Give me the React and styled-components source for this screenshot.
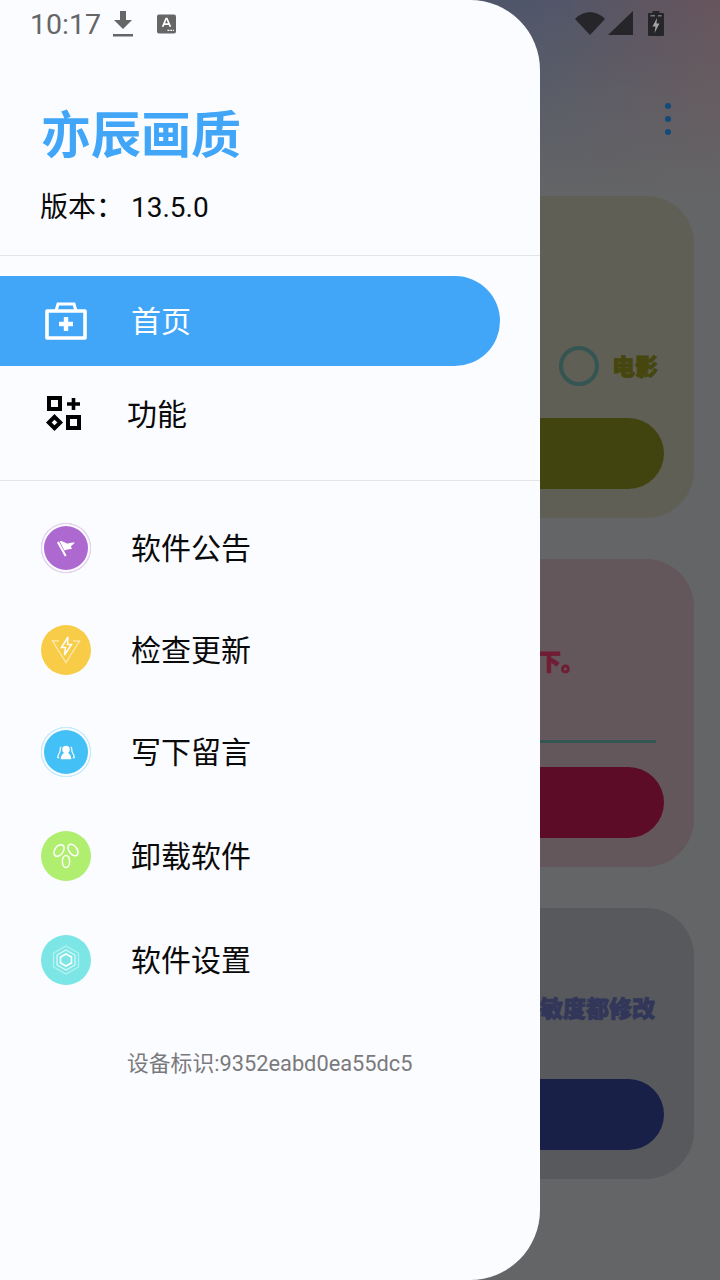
import React from 'react'
import styled, { createGlobalStyle } from 'styled-components'

const colors = {
    BLUE: '#42a6f8',
    DRAWER: '#fbfcff',
    DIVIDER: '#e4e5e9',
    RADIO: '#355552',
    LABEL: '#0a0a0a'
}

const GlobalStyle = createGlobalStyle`
    html, body {
        margin: 0;
        padding: 0;
        height: 100%;
        background: #656667;
    }
    * {
        box-sizing: border-box;
    }
    body {
        font-family: Roboto, "Noto Sans CJK SC", sans-serif;
    }
`

const Screen = styled.div`
    position: relative;
    width: 720px;
    height: 1280px;
    overflow: hidden;
    background: linear-gradient(to bottom, transparent 0, #646566 200px),
        linear-gradient(to right, #4b5665 0, #50566a 540px, #68555c 720px);
`

const Content = styled.main`
    display: flex;
    flex-direction: column;
    gap: 41px;
    padding: 196px 26px 0;
`

const Card = styled.section`
    display: flex;
    flex-direction: column;
    align-items: flex-end;
    height: ${p => p.$height}px;
    padding: 0 30px 29px;
    border-radius: 48px;
    background: ${p => p.$bg};
`

const CardRow = styled.div`
    display: flex;
    align-items: center;
    gap: 13px;
    margin-top: ${p => p.$top}px;
    margin-right: ${p => p.$right}px;
`

const Radio = styled.span`
    width: 40px;
    height: 40px;
    border: 4px solid ${colors.RADIO};
    border-radius: 50%;
`

const CardText = styled.span`
    padding-top: 3px;
    font-size: 23px;
    line-height: 34px;
    font-weight: 900;
    -webkit-text-stroke: 0.8px ${p => p.$color};
    color: ${p => p.$color};
`

const Progress = styled.div`
    width: 140px;
    height: 3px;
    margin-top: ${p => p.$top}px;
    margin-right: 8px;
    background: ${colors.RADIO};
`

const CardButton = styled.div`
    width: 300px;
    height: 71px;
    margin-top: auto;
    border-radius: 36px;
    background: ${p => p.$bg};
`

const MoreDots = styled.div`
    position: absolute;
    top: 103px;
    left: 665px;
    display: flex;
    flex-direction: column;
    gap: 7px;
`

const Dot = styled.span`
    width: 6px;
    height: 6px;
    border-radius: 50%;
    background: #124a78;
`

const Drawer = styled.aside`
    position: absolute;
    top: 0;
    left: 0;
    bottom: 0;
    display: flex;
    flex-direction: column;
    width: 540px;
    border-radius: 0 70px 70px 0;
    background: ${colors.DRAWER};
`

const DrawerHeader = styled.header`
    display: flex;
    flex-direction: column;
    height: 256px;
    padding: 99px 0 0 40px;
    border-bottom: 1px solid ${colors.DIVIDER};
`

const Title = styled.h1`
    margin: 0 0 0 1px;
    font-size: 50px;
    line-height: 74px;
    font-weight: 700;
    color: ${colors.BLUE};
`

const Version = styled.div`
    display: flex;
    margin-top: 15px;
    font-size: 28px;
    line-height: 40px;
    color: ${colors.LABEL};
`

const VersionLabel = styled.span`
    width: 91px;
`

const Nav = styled.nav`
    display: flex;
    flex-direction: column;
    height: 225px;
    padding-top: 20px;
    border-bottom: 1px solid ${colors.DIVIDER};
`

const NavItem = styled.div`
    display: flex;
    align-items: center;
    width: 500px;
    height: 90px;
    padding-left: ${p => p.$pad}px;
    gap: ${p => p.$gap}px;
    border-radius: 0 45px 45px 0;
    font-size: 30px;
    background: ${p => (p.$active ? colors.BLUE : 'transparent')};
    color: ${p => (p.$active ? '#fff' : colors.LABEL)};
    margin-top: ${p => p.$top || 0}px;
`

const ItemLabel = styled.span`
    margin-bottom: 5px;
`

const MenuList = styled.ul`
    display: flex;
    flex-direction: column;
    margin: 0;
    padding: 17px 0 0 41px;
    list-style: none;
`

const MenuItem = styled.li`
    display: flex;
    align-items: center;
    gap: 40px;
    height: 100px;
    margin-top: ${p => p.$top}px;
    font-size: 30px;
    color: ${colors.LABEL};
`

const Badge = styled.span`
    display: flex;
    align-items: center;
    justify-content: center;
    width: 50px;
    height: 50px;
    border-radius: 50%;
    background: ${p => p.$bg};
    box-shadow: ${p => (p.$ring ? `inset 0 0 0 1px ${p.$ring}, inset 0 0 0 3px #fbfcff` : 'none')};
`

const DeviceId = styled.div`
    margin: 38px 0 0 127px;
    font-size: 21.8px;
    line-height: 32px;
    color: #7a7a7c;
`

const StatusBar = styled.div`
    position: absolute;
    top: 0;
    left: 0;
    right: 0;
    display: flex;
    align-items: center;
    height: 48px;
    padding: 0 55px 0 30px;
`

const Time = styled.span`
    font-size: 28.5px;
    color: #666;
`

const StatusLeft = styled.div`
    display: flex;
    align-items: center;
    gap: 10px;
`

const StatusRight = styled.div`
    display: flex;
    align-items: center;
    gap: 13px;
    margin-left: auto;
`

const FlagIcon = () => (
    <svg width="22" height="22" viewBox="0 0 22 22" fill="#fff">
        <path d="M2 5.5 L3.8 4.5 L11.6 18.4 L9.8 19.4 Z" />
        <path d="M4.6 4.2 C8 2.8 10 6.6 13.2 6.4 C15.4 6.2 17.4 5.6 20 5.6 L15.8 9.4 L17 12 C14 11.6 11.6 13 9.4 13.4 Z" />
    </svg>
)

const BoltIcon = () => (
    <svg width="30" height="28" viewBox="0 0 30 28" fill="none" stroke="#fff">
        <path d="M8 5 H1.5 L15 26.5 L28.5 5 H22" strokeOpacity=".55" strokeWidth="1.4" />
        <path d="M17 1 L10.5 11.5 H14.5 L13.5 19 L20.5 8.5 H16.5 Z" strokeWidth="1.5" />
    </svg>
)

const PeopleIcon = () => (
    <svg width="18" height="15" viewBox="0 0 24 20" fill="#fff">
        <circle cx="12" cy="6" r="5" />
        <path d="M5 19 C5 13 8.5 10 12 10 C15.5 10 19 13 19 19 Z" />
        <path d="M5.5 2.5 C3 5 5 8 3.5 10 C2 12 1 14 1 17 H3" fill="none" stroke="#fff" strokeWidth="1.6" />
        <path d="M18.5 2.5 C21 5 19 8 20.5 10 C22 12 23 14 23 17 H21" fill="none" stroke="#fff" strokeWidth="1.6" />
    </svg>
)

const SeedIcon = () => (
    <svg width="28" height="26" viewBox="0 0 28 26" fill="none" stroke="#fff" strokeWidth="1.5">
        <ellipse cx="7" cy="7.5" rx="4.2" ry="6.5" transform="rotate(35 7 7.5)" />
        <ellipse cx="21" cy="7" rx="4" ry="6.5" transform="rotate(-35 21 7)" />
        <ellipse cx="14" cy="18.5" rx="3.6" ry="6" />
    </svg>
)

const HexIcon = () => (
    <svg width="28" height="30" viewBox="0 0 28 30" fill="none" stroke="#fff">
        <path d="M14 1 L26.5 8 V22 L14 29 L1.5 22 V8 Z" strokeOpacity=".45" strokeWidth="1.2" />
        <path d="M14 5 L23 10 V20 L14 25 L5 20 V10 Z" strokeOpacity=".75" strokeWidth="1.2" />
        <path d="M14 9 L19.5 12 V18 L14 21 L8.5 18 V12 Z" strokeWidth="1.6" />
    </svg>
)

const menu = [
    { label: '软件公告', bg: '#ad69cf', ring: '#e2cdee', top: 0, icon: <FlagIcon /> },
    { label: '检查更新', bg: '#f8cc46', top: 2, icon: <BoltIcon /> },
    { label: '写下留言', bg: '#43c0f5', ring: '#c3e9fb', top: 2, icon: <PeopleIcon /> },
    { label: '卸载软件', bg: '#b0ee70', top: 4, icon: <SeedIcon /> },
    { label: '软件设置', bg: '#7ce6e6', top: 4, icon: <HexIcon /> }
]

export default function App() {
    return (
        <Screen>
            <GlobalStyle />
            <Content>
                <Card $height={322} $bg="#5f5f55">
                    <CardRow $top={150} $right={6}>
                        <Radio />
                        <CardText $color="#46470f">电影</CardText>
                    </CardRow>
                    <CardButton $bg="#42440f" />
                </Card>
                <Card $height={308} $bg="#64575b">
                    <CardRow $top={84} $right={80}>
                        <CardText $color="#701c35">下。</CardText>
                    </CardRow>
                    <Progress $top={60} />
                    <CardButton $bg="#5c0c26" />
                </Card>
                <Card $height={271} $bg="#58595d">
                    <CardRow $top={82} $right={9}>
                        <CardText $color="#32375a">敏度都修改</CardText>
                    </CardRow>
                    <CardButton $bg="#182048" />
                </Card>
            </Content>

            <MoreDots>
                <Dot />
                <Dot />
                <Dot />
            </MoreDots>

            <Drawer>
                <DrawerHeader>
                    <Title>亦辰画质</Title>
                    <Version>
                        <VersionLabel>版本：</VersionLabel>
                        <span>13.5.0</span>
                    </Version>
                </DrawerHeader>
                <Nav>
                    <NavItem $active $pad={45} $gap={44}>
                        <svg width="42" height="38" viewBox="0 0 42 38" fill="none" stroke="#fff" strokeWidth="3.6">
                            <path d="M2 9 H40 V36 H2 Z" strokeLinejoin="round" />
                            <path d="M11 9 L13 2 H29 L31 9" strokeWidth="3" />
                            <path d="M21 15 V29 M14 22 H28" strokeWidth="4.4" />
                        </svg>
                        <ItemLabel>首页</ItemLabel>
                    </NavItem>
                    <NavItem $pad={46} $gap={45} $top={3}>
                        <svg width="36" height="36" viewBox="0 0 36 36" fill="none" stroke="#000" strokeWidth="4">
                            <rect x="3" y="2" width="11" height="11" />
                            <path d="M27.5 2 V14 M21 8 H34" strokeWidth="3.6" />
                            <rect x="22" y="21" width="11" height="11" />
                            <path d="M8.5 20.8 L14.2 26.5 L8.5 32.2 L2.8 26.5 Z" />
                        </svg>
                        <ItemLabel>功能</ItemLabel>
                    </NavItem>
                </Nav>
                <MenuList>
                    {menu.map(item => (
                        <MenuItem key={item.label} $top={item.top}>
                            <Badge $bg={item.bg} $ring={item.ring}>
                                {item.icon}
                            </Badge>
                            <ItemLabel>{item.label}</ItemLabel>
                        </MenuItem>
                    ))}
                </MenuList>
                <DeviceId>设备标识:9352eabd0ea55dc5</DeviceId>
            </Drawer>

            <StatusBar>
                <StatusLeft>
                    <Time>10:17</Time>
                    <svg width="24" height="28" viewBox="0 0 24 28" fill="#666">
                        <path d="M9 1 H15 V10 H21 L12 19 L3 10 H9 Z" />
                        <rect x="2" y="24" width="20" height="2.5" />
                    </svg>
                    <svg width="19" height="20" viewBox="0 0 20 20" style={{ marginLeft: 12 }}>
                        <rect width="20" height="20" rx="2" fill="#666" />
                        <path d="M5 13 L9 3.5 H11 L15 13 H13 L12.2 11 H7.8 L7 13 Z M8.5 9.3 H11.5 L10 5.5 Z" fill="#fff" />
                        <path d="M11 16 h2 v1.4 h-2 Z M14 16 h2 v1.4 h-2 Z M17 16 h1 v1.4 h-1 Z" fill="#fff" />
                    </svg>
                </StatusLeft>
                <StatusRight>
                    <svg width="60" height="28" viewBox="0 0 60 28" fill="#26252a">
                        <path d="M1 9 C9 0 23 0 31 9 L16 25 Z" />
                        <path d="M59 1 V25 H34 Z" />
                    </svg>
                    <svg width="18" height="26" viewBox="0 0 18 26">
                        <path d="M5.5 0 H12.5 V2 H16 Q17 2 17 3 V24 Q17 25 16 25 H2 Q1 25 1 24 V3 Q1 2 2 2 H5.5 Z" fill="#26252a" />
                        <path d="M3.5 4 H8 V5.5 H3.5 Z M11 4 H14.5 V5.5 H11 Z" fill="#77767a" />
                        <path d="M10 7 L5.5 15.5 H8.5 L7.5 22 L12.5 12.5 H9.5 Z" fill="#a4a4a6" />
                    </svg>
                </StatusRight>
            </StatusBar>
        </Screen>
    )
}
